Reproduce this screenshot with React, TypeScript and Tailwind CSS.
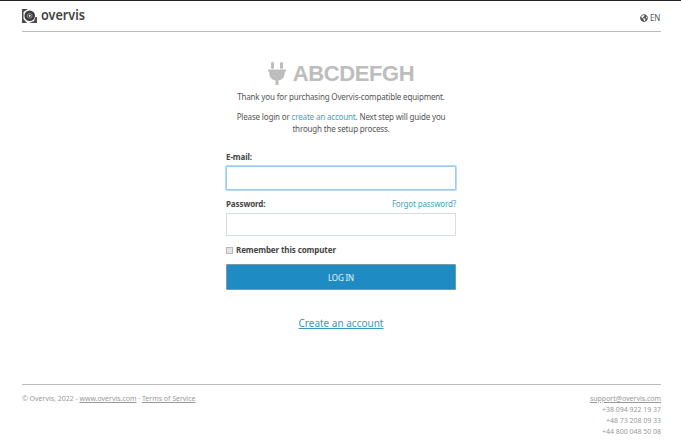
import { FaGlobeAmericas } from "react-icons/fa";

function Logo() {
  return (
    <a className="flex items-start pt-[7px]">
      <svg width="15" height="14" viewBox="0 0 15 14" className="mt-[1px]">
        <path d="M0 0H6L1.5 3V10L5 14H0Z" fill="#4a4a4a" />
        <path d="M15 14H7L12 12L13.5 8H15Z" fill="#4a4a4a" />
        <circle cx="7.7" cy="6.8" r="5.3" fill="#3c3c3c" />
        <circle cx="7.7" cy="6.8" r="2.4" fill="none" stroke="#999" strokeWidth="0.9" />
        <circle cx="7.7" cy="6.8" r="1" fill="#eee" />
      </svg>
      <span className="ml-[4px] inline-block origin-left scale-x-[0.9] text-[14px] leading-[14px] font-semibold text-[#444]">
        overvis
      </span>
    </a>
  );
}

function Plug() {
  return (
    <svg width="18" height="23" viewBox="0 0 18 23" fill="#bdbdbd" className="mb-[2px]">
      <rect x="3" y="0" width="3" height="7" rx="1.4" />
      <rect x="12" y="0" width="3" height="7" rx="1.4" />
      <path d="M0.6 7.5H17.4Q18 7.5 18 8.2V9Q18 9.6 17.4 9.6H16.7V11.5C16.7 15.3 14 17.9 10.5 18.4V23H7.5V18.4C4 17.9 1.3 15.3 1.3 11.5V9.6H0.6Q0 9.6 0 9V8.2Q0 7.5 0.6 7.5Z" />
    </svg>
  );
}

export default function App() {
  return (
    <div className="flex h-[447px] w-[681px] flex-col overflow-hidden border-t border-[#222] bg-white pr-[20px] pl-[22px] font-['Noto_Sans',sans-serif] text-[8px] text-[#555]">
      <header className="flex h-[31px] shrink-0 justify-between border-b border-[#bbb]">
        <Logo />
        <div className="flex items-center gap-[2px] pt-[3px] pr-[1px] text-[8px] tracking-[-0.3px]">
          <FaGlobeAmericas className="size-[8px]" />
          <span>EN</span>
        </div>
      </header>

      <main className="ml-[204px] flex h-[352px] w-[230px] shrink-0 flex-col">
        <h1 className="mt-[30px] flex h-[24px] items-center justify-center gap-[7px] font-['Liberation_Sans',sans-serif] text-[22px] leading-[24px] font-bold tracking-[-0.4px] text-[#bdbdbd]">
          <Plug />
          <span>ABCDEFGH</span>
        </h1>
        <p className="mt-[5px] text-center leading-[12px] tracking-[-0.16px] whitespace-nowrap">
          Thank you for purchasing Overvis-compatible equipment.
        </p>
        <p className="mt-[8px] text-center leading-[12px] tracking-[-0.16px] whitespace-nowrap">
          Please login or <a className="text-[#4a9fbd]">create an account</a>. Next step will guide you
          <br />
          through the setup process.
        </p>

        <form className="flex flex-col">
          <label className="mt-[16px] leading-[12px] font-bold tracking-[-0.1px] text-[#444]">E-mail:</label>
          <input className="mt-[3px] h-[24px] w-full rounded-[1px] border border-[#9ccbf5] bg-white shadow-[0_0_0_1px_#b5dafa] outline-none" />
          <div className="mt-[8px] flex justify-between leading-[12px]">
            <label className="font-bold tracking-[-0.1px] text-[#444]">Password:</label>
            <a className="tracking-[-0.16px] text-[#4a9fbd]">Forgot password?</a>
          </div>
          <input className="mt-[3px] h-[23px] w-full border border-[#d5dde2] bg-white" />
          <label className="mt-[8px] flex items-center gap-[3px] leading-[12px] font-bold tracking-[-0.1px] text-[#444]">
            <span className="size-[7px] border border-[#b5b5b5] bg-[#e4e4e4]" />
            Remember this computer
          </label>
          <button type="button" className="mt-[8px] h-[26px] rounded-[1px] border border-[#7799aa] bg-[#1f8bc3] pt-[2px] text-[8px] tracking-[-0.15px] text-[#e6f2f8]">
            LOG IN
          </button>
        </form>
        <a className="mt-[26px] text-center text-[10px] leading-[15px] text-[#3b97b8] underline">Create an account</a>
      </main>

      <footer className="flex justify-between border-t border-[#bbb] pt-[8px] text-[7px] leading-[11px] tracking-[-0.02px] text-[#999]">
        <p>
          © Overvis, 2022 - <a className="underline">www.overvis.com</a> · <a className="underline">Terms of Service</a>
        </p>
        <address className="text-right not-italic">
          <a className="underline">support@overvis.com</a>
          <p>+38 094 922 19 37</p>
          <p>+48 73 208 09 33</p>
          <p>+44 800 048 50 08</p>
        </address>
      </footer>
    </div>
  );
}
